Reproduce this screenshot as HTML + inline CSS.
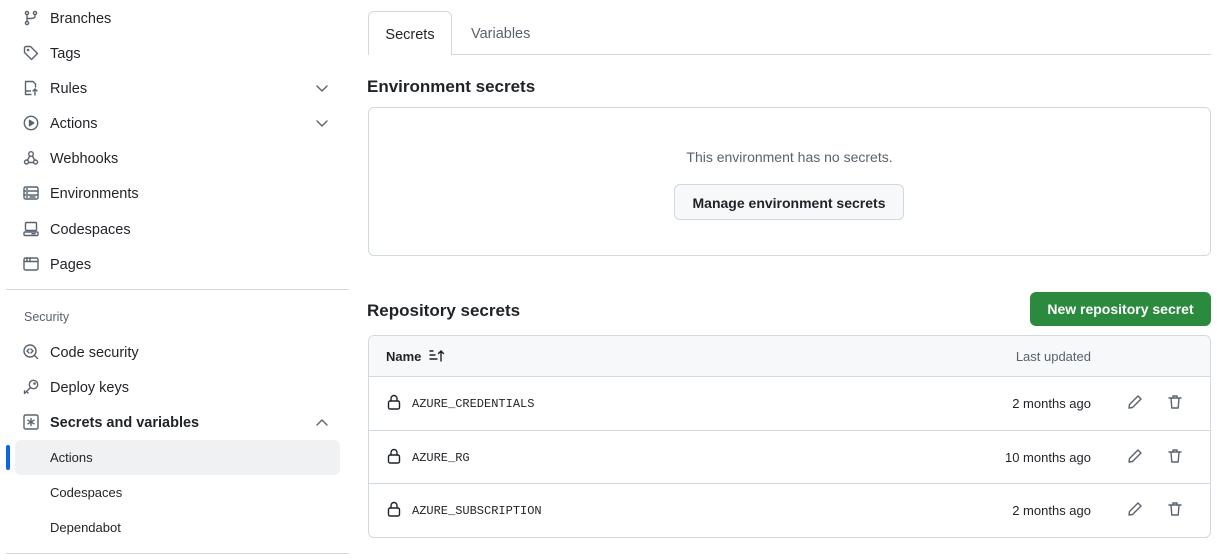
<!DOCTYPE html>
<html><head><meta charset="utf-8"><style>
*{box-sizing:border-box;margin:0;padding:0}
body{width:1227px;height:560px;background:#fff;font-family:"Liberation Sans",sans-serif;color:#1f2328;position:relative;overflow:hidden;font-size:14px}
.a{position:absolute}
.nav{position:absolute;left:50px;font-size:14.5px;line-height:20px;transform:translateY(-9px)}
.ic{position:absolute;left:23px;width:16px;height:16px;transform:translateY(-8px)}
.ic svg{display:block}
svg{fill:none;stroke:#59636e;stroke-width:1.4;stroke-linecap:round;stroke-linejoin:round}
.chev{position:absolute;left:315px;transform:translateY(-6px)}
.row{position:absolute;left:368px;width:843px;border-top:1px solid #d1d9e0}
.mono{font-family:"Liberation Mono",monospace;font-size:12px}
</style></head><body>
<div class="ic" style="top:18px"><svg width="16" height="16"><circle cx="4" cy="3" r="1.6"/><circle cx="12" cy="3" r="1.6"/><circle cx="4" cy="13" r="1.6"/><path d="M4 4.6v6.8M12 4.6v1.4c0 2-2 2.5-4 2.5H4"/></svg></div>
<div class="nav" style="top:18px">Branches</div>
<div class="ic" style="top:53px"><svg width="16" height="16"><path d="M1.5 2.5v5l7 7 6-6-7-7h-5z"/><circle cx="5" cy="5" r=".6"/></svg></div>
<div class="nav" style="top:53px">Tags</div>
<div class="ic" style="top:88px"><svg width="16" height="16"><path d="M10 1.5H2.5v13H8M10 1.5l2.5 2.5v3M12 9v6M10 11l2-2 2 2M2.5 11h5"/></svg></div>
<div class="nav" style="top:88px">Rules</div>
<div class="chev" style="top:88px"><svg width="14" height="12"><path d="M2 3l5 5 5-5"/></svg></div>
<div class="ic" style="top:123px"><svg width="16" height="16"><circle cx="8" cy="8" r="6.7"/><path d="M6.5 5.3v5.4L10.7 8z" fill="#59636e"/></svg></div>
<div class="nav" style="top:123px">Actions</div>
<div class="chev" style="top:123px"><svg width="14" height="12"><path d="M2 3l5 5 5-5"/></svg></div>
<div class="ic" style="top:158px"><svg width="16" height="16"><circle cx="8" cy="4" r="2.3"/><circle cx="3.5" cy="12" r="2"/><circle cx="12.5" cy="12" r="2"/><path d="M6.8 6L4.5 10M5.5 12.5h5M9.5 6l2 4"/></svg></div>
<div class="nav" style="top:158px">Webhooks</div>
<div class="ic" style="top:193px"><svg width="16" height="16"><rect x="1" y="2" width="14" height="12" rx="1.5"/><path d="M1 6h14M1 10h14M3.5 4h1M3.5 8h1M3.5 12h1M7 12h5"/></svg></div>
<div class="nav" style="top:193px">Environments</div>
<div class="ic" style="top:229px"><svg width="16" height="16"><rect x="2.5" y="1.5" width="11" height="8" rx="1"/><rect x="1" y="11" width="14" height="3.5" rx="1"/><path d="M9 12.7h3"/></svg></div>
<div class="nav" style="top:229px">Codespaces</div>
<div class="ic" style="top:264px"><svg width="16" height="16"><rect x="1" y="2" width="14" height="12" rx="1.5"/><path d="M1 5.5h14M4 2v3.5M7 2v3.5"/></svg></div>
<div class="nav" style="top:264px">Pages</div>
<div class="a" style="left:6px;top:289px;width:343px;border-top:1px solid #d1d9e0"></div>
<div class="a" style="left:24px;top:310px;font-size:12.5px;color:#59636e">Security</div>
<div class="ic" style="top:352px"><svg width="16" height="16"><circle cx="7" cy="7" r="6"/><path d="M11.5 11.5l3 3M6 5l-2 2 2 2M8 5l2 2-2 2"/></svg></div>
<div class="nav" style="top:352px">Code security</div>
<div class="ic" style="top:387px"><svg width="16" height="16"><circle cx="10.5" cy="5.5" r="4.2"/><path d="M7.5 8.5L1.5 14.5v-2.5M3.5 12.5l1.5 1.5"/><circle cx="11.5" cy="4.5" r=".6"/></svg></div>
<div class="nav" style="top:387px">Deploy keys</div>
<div class="ic" style="top:422px"><svg width="16" height="16"><rect x="1" y="1" width="14" height="14" rx="1.5"/><path d="M8 4.5v7M5 6.2l6 3.6M11 6.2l-6 3.6"/></svg></div>
<div class="nav" style="top:422px;font-weight:bold">Secrets and variables</div>
<div class="chev" style="top:422px"><svg width="14" height="12"><path d="M2 8l5-5 5 5"/></svg></div>
<div class="a" style="left:15px;top:440px;width:325px;height:35px;background:#eff1f3;border-radius:6px"></div>
<div class="a" style="left:6px;top:445px;width:4px;height:25px;background:#0969da;border-radius:2px"></div>
<div class="nav" style="top:457px;font-size:13px">Actions</div>
<div class="nav" style="top:492px;font-size:13px">Codespaces</div>
<div class="nav" style="top:527px;font-size:13px">Dependabot</div>
<div class="a" style="left:6px;top:553px;width:343px;border-top:1px solid #d1d9e0"></div>
<div class="a" style="left:368px;top:54px;width:843px;border-top:1px solid #d1d9e0"></div>
<div class="a" style="left:368px;top:11px;width:84px;height:44px;border:1px solid #d1d9e0;border-bottom:none;border-radius:6px 6px 0 0;background:#fff;text-align:center;line-height:46px;font-size:14.5px">Secrets</div>
<div class="a" style="left:471px;top:26px;font-size:14.5px;color:#59636e">Variables</div>
<div class="a" style="left:367px;top:77px;font-size:17px;font-weight:bold">Environment secrets</div>
<div class="a" style="left:368px;top:107px;width:843px;height:149px;border:1px solid #d1d9e0;border-radius:6px"></div>
<div class="a" style="left:368px;top:149px;width:843px;text-align:center;color:#59636e;font-size:14px">This environment has no secrets.</div>
<div class="a" style="left:674px;top:184px;width:230px;height:36px;border:1px solid #d1d9e0;border-radius:6px;background:#f6f8fa;text-align:center;line-height:36px;font-weight:bold;font-size:14px">Manage environment secrets</div>
<div class="a" style="left:367px;top:301px;font-size:17px;font-weight:bold">Repository secrets</div>
<div class="a" style="left:1030px;top:292px;width:181px;height:34px;background:#2c8a3e;border-radius:6px;color:#fff;text-align:center;line-height:35px;font-weight:bold;font-size:14px">New repository secret</div>
<div class="a" style="left:368px;top:335px;width:843px;height:203px;border:1px solid #d1d9e0;border-radius:6px;overflow:hidden">
<div style="height:41px;background:#f6f8fa;border-bottom:1px solid #d1d9e0"></div></div>
<div class="a" style="left:386px;top:349px;font-size:13px;font-weight:bold">Name</div>
<div class="a" style="left:429px;top:349px"><svg width="20" height="14" style="stroke:#1f2328"><path d="M1 2h3M1 6h5M1 10h7M12 12V2M9.5 4.5L12 2l2.5 2.5"/></svg></div>
<div class="a" style="left:991px;top:349px;width:100px;text-align:right;font-size:13px;color:#59636e">Last updated</div>
<div class="row" style="top:430px"></div><div class="row" style="top:483px"></div>

<div class="a" style="left:386px;top:394px"><svg width="16" height="16" style="stroke:#1f2328"><rect x="2.5" y="7" width="11" height="8" rx="1.5"/><path d="M5 7V4.5a3 3 0 016 0V7"/></svg></div>
<div class="a mono" style="left:412px;top:397px">AZURE_CREDENTIALS</div>
<div class="a" style="left:941px;top:396px;width:150px;text-align:right;font-size:13px">2 months ago</div>
<div class="a" style="left:1127px;top:394px"><svg width="16" height="16"><path d="M11 2l3 3-8.5 8.5L2 14l.5-3.5z"/></svg></div>
<div class="a" style="left:1167px;top:394px"><svg width="16" height="16"><path d="M2 4h12M6 4V2h4v2M4 4l.8 10h6.4L12 4"/></svg></div>

<div class="a" style="left:386px;top:448px"><svg width="16" height="16" style="stroke:#1f2328"><rect x="2.5" y="7" width="11" height="8" rx="1.5"/><path d="M5 7V4.5a3 3 0 016 0V7"/></svg></div>
<div class="a mono" style="left:412px;top:451px">AZURE_RG</div>
<div class="a" style="left:941px;top:450px;width:150px;text-align:right;font-size:13px">10 months ago</div>
<div class="a" style="left:1127px;top:448px"><svg width="16" height="16"><path d="M11 2l3 3-8.5 8.5L2 14l.5-3.5z"/></svg></div>
<div class="a" style="left:1167px;top:448px"><svg width="16" height="16"><path d="M2 4h12M6 4V2h4v2M4 4l.8 10h6.4L12 4"/></svg></div>

<div class="a" style="left:386px;top:501px"><svg width="16" height="16" style="stroke:#1f2328"><rect x="2.5" y="7" width="11" height="8" rx="1.5"/><path d="M5 7V4.5a3 3 0 016 0V7"/></svg></div>
<div class="a mono" style="left:412px;top:504px">AZURE_SUBSCRIPTION</div>
<div class="a" style="left:941px;top:503px;width:150px;text-align:right;font-size:13px">2 months ago</div>
<div class="a" style="left:1127px;top:501px"><svg width="16" height="16"><path d="M11 2l3 3-8.5 8.5L2 14l.5-3.5z"/></svg></div>
<div class="a" style="left:1167px;top:501px"><svg width="16" height="16"><path d="M2 4h12M6 4V2h4v2M4 4l.8 10h6.4L12 4"/></svg></div>
</body></html>
